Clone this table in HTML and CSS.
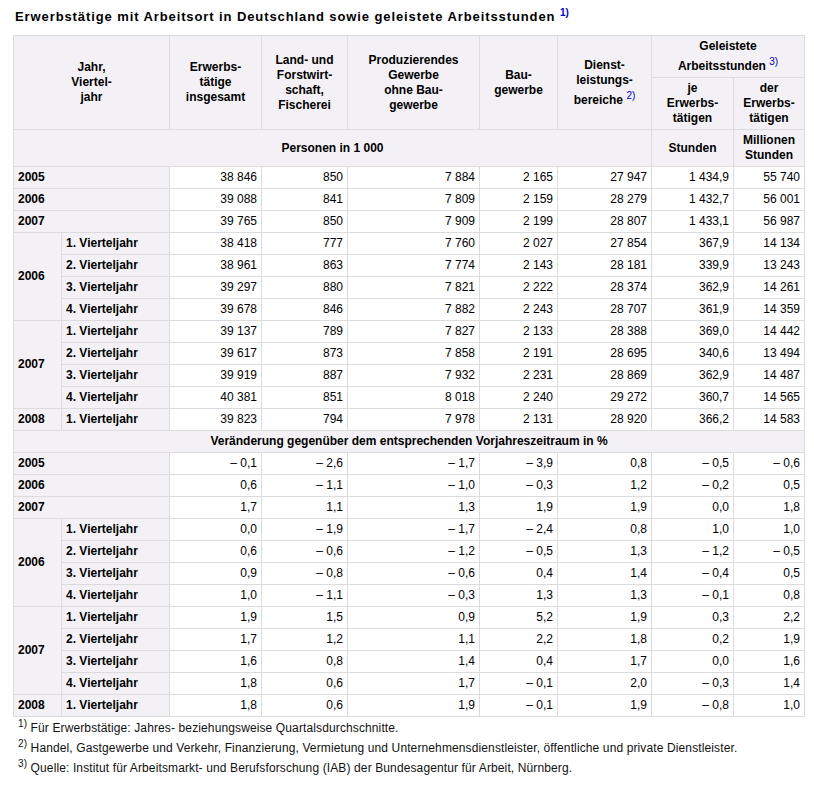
FILE: index.html
```html
<!DOCTYPE html>
<html lang="de">
<head>
<meta charset="utf-8">
<title>Erwerbstätige</title>
<link rel="stylesheet" href="styles.css">
</head>
<body>
<div class="page">
<h1 class="title">Erwerbstätige mit Arbeitsort in Deutschland sowie geleistete Arbeitsstunden <sup class="ref">1)</sup></h1>
<table class="data">
<colgroup>
<col class="c-year"><col class="c-q"><col class="c-erw"><col class="c-land"><col class="c-prod"><col class="c-bau"><col class="c-dienst"><col class="c-je"><col class="c-der">
</colgroup>
<thead>
<tr>
<th colspan="2" rowspan="2">Jahr,<br>Viertel-<br>jahr</th>
<th rowspan="2">Erwerbs-<br>tätige<br>insgesamt</th>
<th rowspan="2">Land- und<br>Forstwirt-<br>schaft,<br>Fischerei</th>
<th rowspan="2">Produzierendes<br>Gewerbe<br>ohne Bau-<br>gewerbe</th>
<th rowspan="2">Bau-<br>gewerbe</th>
<th rowspan="2">Dienst-<br>leistungs-<br>bereiche <sup class="ref">2)</sup></th>
<th colspan="2">Geleistete<br>Arbeitsstunden <sup class="ref">3)</sup></th>
</tr>
<tr>
<th>je<br>Erwerbs-<br>tätigen</th>
<th>der<br>Erwerbs-<br>tätigen</th>
</tr>
<tr>
<th colspan="7">Personen in 1 000</th>
<th>Stunden</th>
<th>Millionen<br>Stunden</th>
</tr>
</thead>
<tbody>
<tr><th class="yr" colspan="2">2005</th><td>38 846</td><td>850</td><td>7 884</td><td>2 165</td><td>27 947</td><td>1 434,9</td><td>55 740</td></tr>
<tr><th class="yr" colspan="2">2006</th><td>39 088</td><td>841</td><td>7 809</td><td>2 159</td><td>28 279</td><td>1 432,7</td><td>56 001</td></tr>
<tr><th class="yr" colspan="2">2007</th><td>39 765</td><td>850</td><td>7 909</td><td>2 199</td><td>28 807</td><td>1 433,1</td><td>56 987</td></tr>
<tr><th class="yr" rowspan="4">2006</th><th class="yr">1. Vierteljahr</th><td>38 418</td><td>777</td><td>7 760</td><td>2 027</td><td>27 854</td><td>367,9</td><td>14 134</td></tr>
<tr><th class="yr">2. Vierteljahr</th><td>38 961</td><td>863</td><td>7 774</td><td>2 143</td><td>28 181</td><td>339,9</td><td>13 243</td></tr>
<tr><th class="yr">3. Vierteljahr</th><td>39 297</td><td>880</td><td>7 821</td><td>2 222</td><td>28 374</td><td>362,9</td><td>14 261</td></tr>
<tr><th class="yr">4. Vierteljahr</th><td>39 678</td><td>846</td><td>7 882</td><td>2 243</td><td>28 707</td><td>361,9</td><td>14 359</td></tr>
<tr><th class="yr" rowspan="4">2007</th><th class="yr">1. Vierteljahr</th><td>39 137</td><td>789</td><td>7 827</td><td>2 133</td><td>28 388</td><td>369,0</td><td>14 442</td></tr>
<tr><th class="yr">2. Vierteljahr</th><td>39 617</td><td>873</td><td>7 858</td><td>2 191</td><td>28 695</td><td>340,6</td><td>13 494</td></tr>
<tr><th class="yr">3. Vierteljahr</th><td>39 919</td><td>887</td><td>7 932</td><td>2 231</td><td>28 869</td><td>362,9</td><td>14 487</td></tr>
<tr><th class="yr">4. Vierteljahr</th><td>40 381</td><td>851</td><td>8 018</td><td>2 240</td><td>29 272</td><td>360,7</td><td>14 565</td></tr>
<tr><th class="yr">2008</th><th class="yr">1. Vierteljahr</th><td>39 823</td><td>794</td><td>7 978</td><td>2 131</td><td>28 920</td><td>366,2</td><td>14 583</td></tr>
<tr><th class="section" colspan="9">Veränderung gegenüber dem entsprechenden Vorjahreszeitraum in %</th></tr>
<tr><th class="yr" colspan="2">2005</th><td>–&nbsp;0,1</td><td>–&nbsp;2,6</td><td>–&nbsp;1,7</td><td>–&nbsp;3,9</td><td>0,8</td><td>–&nbsp;0,5</td><td>–&nbsp;0,6</td></tr>
<tr><th class="yr" colspan="2">2006</th><td>0,6</td><td>–&nbsp;1,1</td><td>–&nbsp;1,0</td><td>–&nbsp;0,3</td><td>1,2</td><td>–&nbsp;0,2</td><td>0,5</td></tr>
<tr><th class="yr" colspan="2">2007</th><td>1,7</td><td>1,1</td><td>1,3</td><td>1,9</td><td>1,9</td><td>0,0</td><td>1,8</td></tr>
<tr><th class="yr" rowspan="4">2006</th><th class="yr">1. Vierteljahr</th><td>0,0</td><td>–&nbsp;1,9</td><td>–&nbsp;1,7</td><td>–&nbsp;2,4</td><td>0,8</td><td>1,0</td><td>1,0</td></tr>
<tr><th class="yr">2. Vierteljahr</th><td>0,6</td><td>–&nbsp;0,6</td><td>–&nbsp;1,2</td><td>–&nbsp;0,5</td><td>1,3</td><td>–&nbsp;1,2</td><td>–&nbsp;0,5</td></tr>
<tr><th class="yr">3. Vierteljahr</th><td>0,9</td><td>–&nbsp;0,8</td><td>–&nbsp;0,6</td><td>0,4</td><td>1,4</td><td>–&nbsp;0,4</td><td>0,5</td></tr>
<tr><th class="yr">4. Vierteljahr</th><td>1,0</td><td>–&nbsp;1,1</td><td>–&nbsp;0,3</td><td>1,3</td><td>1,3</td><td>–&nbsp;0,1</td><td>0,8</td></tr>
<tr><th class="yr" rowspan="4">2007</th><th class="yr">1. Vierteljahr</th><td>1,9</td><td>1,5</td><td>0,9</td><td>5,2</td><td>1,9</td><td>0,3</td><td>2,2</td></tr>
<tr><th class="yr">2. Vierteljahr</th><td>1,7</td><td>1,2</td><td>1,1</td><td>2,2</td><td>1,8</td><td>0,2</td><td>1,9</td></tr>
<tr><th class="yr">3. Vierteljahr</th><td>1,6</td><td>0,8</td><td>1,4</td><td>0,4</td><td>1,7</td><td>0,0</td><td>1,6</td></tr>
<tr><th class="yr">4. Vierteljahr</th><td>1,8</td><td>0,6</td><td>1,7</td><td>–&nbsp;0,1</td><td>2,0</td><td>–&nbsp;0,3</td><td>1,4</td></tr>
<tr><th class="yr">2008</th><th class="yr">1. Vierteljahr</th><td>1,8</td><td>0,6</td><td>1,9</td><td>–&nbsp;0,1</td><td>1,9</td><td>–&nbsp;0,8</td><td>1,0</td></tr>
</tbody>
</table>
<div class="notes">
<p><sup>1)</sup> Für Erwerbstätige: Jahres- beziehungsweise Quartalsdurchschnitte.</p>
<p><sup>2)</sup> Handel, Gastgewerbe und Verkehr, Finanzierung, Vermietung und Unternehmensdienstleister, öffentliche und private Dienstleister.</p>
<p><sup>3)</sup> Quelle: Institut für Arbeitsmarkt- und Berufsforschung (IAB) der Bundesagentur für Arbeit, Nürnberg.</p>
</div>
</div>
</body>
</html>
```
FILE: styles.css
```css
html, body {
  margin: 0;
  padding: 0;
  background: #ffffff;
}
body {
  font-family: "Liberation Sans", Arial, sans-serif;
  color: #000000;
  font-size: 12px;
}
.page {
  padding: 3px 0 0 13px;
}
.title {
  margin: 0 0 0 2px;
  font-size: 13px;
  font-weight: bold;
  letter-spacing: 0.9px;
  line-height: 20px;
  height: 32px;
}
.ref {
  color: #0000cc;
  font-weight: normal;
  font-size: 10px;
  letter-spacing: 0;
}
.title .ref {
  font-weight: bold;
}
.data {
  border-collapse: collapse;
  table-layout: fixed;
  width: 792px;
  font-size: 12px;
  line-height: 15px;
}
.c-year { width: 48px; }
.c-q { width: 108px; }
.c-erw { width: 92px; }
.c-land { width: 86px; }
.c-prod { width: 132px; }
.c-bau { width: 78px; }
.c-dienst { width: 94px; }
.c-je { width: 82px; }
.c-der { width: 71px; }
.data th, .data td {
  border: 1px solid #dcdcdc;
  padding: 3px 4px;
}
.data th {
  background: #f3f1f5;
  font-weight: bold;
  text-align: center;
}
.data th.yr {
  text-align: left;
}
.data td {
  text-align: right;
  white-space: nowrap;
  background: #ffffff;
}
.notes {
  margin-top: 1px;
  padding-left: 5px;
  color: #111111;
  letter-spacing: 0.12px;
}
.notes p {
  margin: 0;
  line-height: 20px;
}
.notes sup {
  font-size: 10px;
  line-height: 0;
}
```
